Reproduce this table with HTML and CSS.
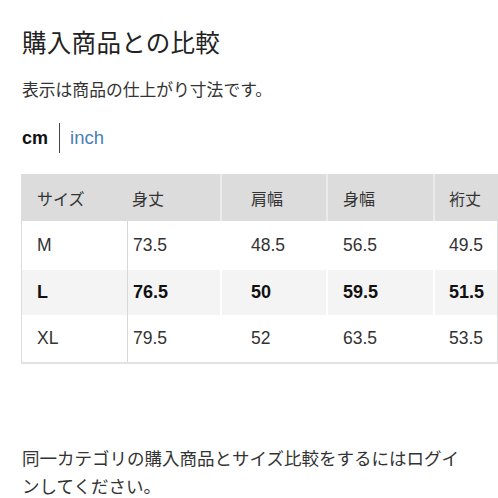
FILE: index.html
```html
<!DOCTYPE html>
<html lang="ja">
<head>
<meta charset="utf-8">
<link rel="stylesheet" href="styles.css">
</head>
<body>
<div class="page">
  <h1 class="title">購入商品との比較</h1>
  <p class="note">表示は商品の仕上がり寸法です。</p>
  <div class="units">
    <span class="unit-active">cm</span>
    <span class="unit-sep"></span>
    <span class="unit-link">inch</span>
  </div>
  <table class="size-table">
    <colgroup>
      <col class="c1"><col class="c2"><col class="c3"><col class="c4"><col class="c5">
    </colgroup>
    <thead>
      <tr><th>サイズ</th><th>身丈</th><th>肩幅</th><th>身幅</th><th>裄丈</th></tr>
    </thead>
    <tbody>
      <tr class="r-m"><td>M</td><td>73.5</td><td>48.5</td><td>56.5</td><td>49.5</td></tr>
      <tr class="r-l current"><td>L</td><td>76.5</td><td>50</td><td>59.5</td><td>51.5</td></tr>
      <tr class="r-xl"><td>XL</td><td>79.5</td><td>52</td><td>63.5</td><td>53.5</td></tr>
    </tbody>
  </table>
  <p class="login">同一カテゴリの購入商品とサイズ比較をするにはログインしてください。</p>
</div>
</body>
</html>
```

FILE: styles.css
```css
html, body {
  margin: 0;
  padding: 0;
  background: #fff;
}
body {
  font-family: "Liberation Sans", "Noto Sans CJK JP", sans-serif;
  color: #222;
}
.page {
  padding: 28px 2px 0 21px;
}
.title {
  margin: 0 0 0 1px;
  font-family: "Noto Sans CJK JP", sans-serif;
  font-weight: 400;
  font-size: 24.5px;
  line-height: 28px;
  letter-spacing: 0.3px;
  color: #222;
}
.note {
  margin: 21px 0 0 1px;
  font-family: "Noto Sans CJK JP", sans-serif;
  font-size: 16.8px;
  line-height: 24px;
  color: #333;
}
.units {
  margin: 22px 0 0 1px;
  display: flex;
  align-items: center;
  height: 30px;
  font-size: 18px;
}
.unit-active {
  font-weight: 700;
  color: #111;
}
.unit-sep {
  width: 1px;
  height: 30px;
  background: #444;
  margin: 0 10px 0 11px;
}
.unit-link {
  color: #4a7eb4;
  font-size: 18.5px;
}
.size-table {
  margin-top: 21px;
  width: 475px;
  table-layout: fixed;
  border-collapse: separate;
  border-spacing: 0;
  border-left: 1px solid #dcdcdc;
  border-right: 1px solid #dcdcdc;
  border-bottom: 2px solid #e2e2e2;
}
.c1 { width: 105px; }
.c2 { width: 93px; }
.c3 { width: 106px; }
.c4 { width: 107px; }
.c5 { width: 64px; }
.size-table th {
  background: #dcdcdc;
  height: 47px;
  padding: 0;
  text-align: left;
  font-family: "Noto Sans CJK JP", sans-serif;
  font-weight: 400;
  font-size: 16px;
  color: #333;
  border-left: 2px solid #ebebeb;
  vertical-align: middle;
}
.size-table th:first-child,
.size-table th:nth-child(2) {
  border-left: none;
}
.size-table td {
  padding: 0;
  text-align: left;
  font-size: 17.5px;
  color: #333;
  border-left: 2px solid #fff;
  vertical-align: middle;
}
.size-table td:first-child {
  border-left: none;
}
.size-table td:nth-child(2) {
  border-left: 1px solid #d8d8d8;
}
.size-table th:nth-child(1), .size-table td:nth-child(1) { padding-left: 15px; }
.size-table th:nth-child(2), .size-table td:nth-child(2) { padding-left: 5px; }
.size-table th:nth-child(3), .size-table td:nth-child(3) { padding-left: 29px; }
.size-table th:nth-child(4), .size-table td:nth-child(4) { padding-left: 15px; }
.size-table th:nth-child(5), .size-table td:nth-child(5) { padding-left: 14px; }
.r-m td { height: 49px; }
.r-l td { height: 45px; }
.r-xl td { height: 47px; }
.current td {
  background: #f4f4f4;
  font-weight: 700;
  color: #111;
  font-size: 18px;
}
.login {
  margin: 80px 0 0 1px;
  font-family: "Noto Sans CJK JP", sans-serif;
  font-size: 17.5px;
  line-height: 28px;
  color: #333;
  max-width: 445px;
}
```
